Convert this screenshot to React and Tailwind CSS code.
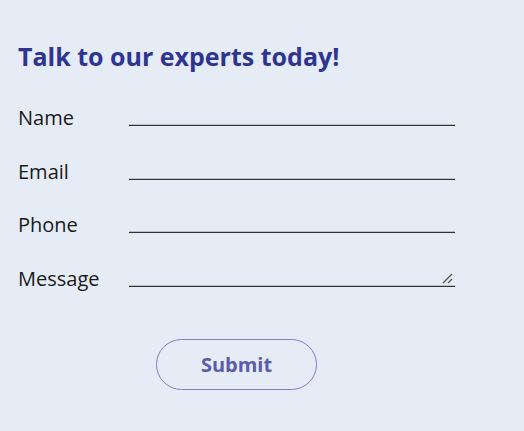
import React from "react";

const fields = ["Name", "Email", "Phone"];

export default function App() {
  return (
    <div className="w-[524px] h-[431px] bg-[#e6ecf5] pl-[18px] pt-[40px] font-['Open_Sans',sans-serif]">
      <h2 className="text-[25px] leading-[32px] font-bold text-[#2e3591]">
        Talk to our experts today!
      </h2>

      <form className="mt-[32px] flex flex-col gap-[25.5px]" onSubmit={(e) => e.preventDefault()}>
        {fields.map((f) => (
          <div key={f} className="flex items-end">
            <label className="w-[111px] text-[20px] leading-[28px] text-[#1a1a1a]">{f}</label>
            <input
              type="text"
              className="w-[326px] h-[20px] mb-[6px] bg-transparent outline-none shadow-[inset_0_-1px_0_#333,inset_0_-2px_0_#b9bec7]"
            />
          </div>
        ))}
        <div className="flex items-end">
          <label className="w-[111px] text-[20px] leading-[28px] text-[#1a1a1a]">Message</label>
          <div className="relative mb-[6px]">
            <textarea
              rows={1}
              className="block w-[326px] h-[20px] bg-transparent outline-none resize-none shadow-[inset_0_-1px_0_#333,inset_0_-2px_0_#b9bec7]"
            />
            <svg className="absolute right-[2px] bottom-[3px] pointer-events-none" width="11" height="11" viewBox="0 0 11 11">
              <path d="M1 10 L10 1 M6 10 L10 6" stroke="#555" strokeWidth="1.3" fill="none" />
            </svg>
          </div>
        </div>

        <button
          type="submit"
          className="mt-[21px] ml-[138px] w-[161px] h-[51px] rounded-full border border-[#7c7fc6] text-[20px] font-bold text-[#5a5da8]"
        >
          Submit
        </button>
      </form>
    </div>
  );
}
